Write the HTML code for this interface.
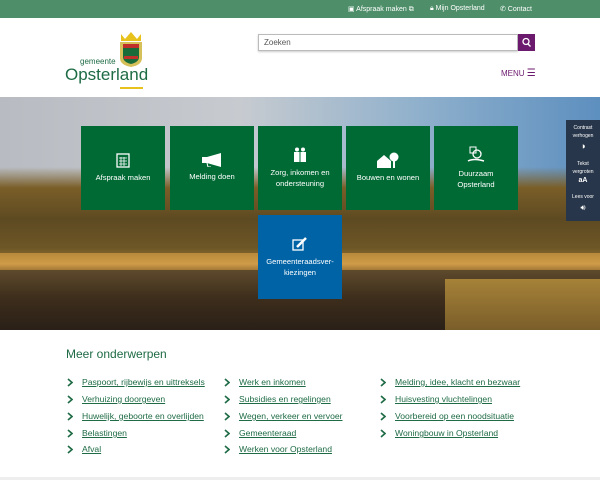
<!DOCTYPE html>
<html><head><meta charset="utf-8">
<style>
*{margin:0;padding:0;box-sizing:border-box}
body{width:600px;height:480px;overflow:hidden;background:#fff;font-family:"Liberation Sans",sans-serif;position:relative}
.top{position:absolute;left:0;top:0;width:600px;height:18px;background:#4e8f6a;color:#fff;font-size:7px}
.top span{position:absolute;top:5px}
.hdr{position:absolute;top:18px;left:0;width:600px;height:79px;background:#fff}
.search{position:absolute;left:258px;top:34px;width:260px;height:17px;border:1px solid #bbb;box-shadow:0 1px 2px rgba(0,0,0,.2);font-size:8px;color:#555;padding:3px 5px}
.sbtn{position:absolute;left:518px;top:34px;width:17px;height:17px;background:#6c1a6e}
.menu{position:absolute;left:501px;top:68px;font-size:8px;color:#6c1a6e}
.hero{position:absolute;left:0;top:97px;width:600px;height:233px;overflow:hidden;
background:linear-gradient(90deg,#b8bcc2,#c7cbd0 40%,#8fb0cc 70%,#5d8fbf)}
.trees{position:absolute;left:0;top:70px;width:600px;height:95px;background:linear-gradient(180deg,rgba(110,90,40,0),#7a5e28 22%,#5e4a22 55%,#6d5626 85%,#9a7430 100%)}
.grass{position:absolute;left:0;top:156px;width:600px;height:18px;background:linear-gradient(180deg,#b88a3a,#cf9c48 60%,#9d7434)}
.water{position:absolute;left:0;top:173px;width:600px;height:60px;background:linear-gradient(180deg,#5e4a2c,#3e2e1c 45%,#2a2017)}
.rg{position:absolute;left:445px;top:182px;width:155px;height:51px;background:linear-gradient(180deg,#a68238,#7a5e2a)}
.tile{position:absolute;width:84px;height:84px;background:#006a35;color:#fff;font-size:7.6px;text-align:center;display:flex;flex-direction:column;align-items:center;justify-content:center;line-height:1.5}
.tile svg{margin-bottom:4px}
.side{position:absolute;left:566px;top:120px;width:34px;height:101px;background:#27364a;color:#fff;font-size:5px;text-align:center;line-height:1.5;padding-top:5px}
h2{position:absolute;left:66px;top:347px;font-size:12px;font-weight:normal;color:#1e6b45}
.l{position:absolute;font-size:8.6px;color:#1e6b45;text-decoration:underline}
.c{position:absolute;width:6px;height:9px}
.bot{position:absolute;left:0;top:477px;width:600px;height:3px;background:#eee}
</style></head><body>
<div class="top">
<span style="left:348px">▣ Afspraak maken ⧉</span>
<span style="left:430px">🔒︎ Mijn Opsterland</span>
<span style="left:500px">✆ Contact</span>
</div>
<div class="hdr">
<svg style="position:absolute;left:117px;top:12px" width="28" height="38" viewBox="0 0 28 38">
<path d="M4 4 L8 9 L14 2 L20 9 L24 4 L24 11 L4 11Z" fill="#e7c21c"/>
<path d="M3 12 H25 V28 Q25 35 14 37 Q3 35 3 28Z" fill="#d6c05a"/>
<path d="M6 14 H22 V27 Q22 32 14 34 Q6 32 6 27Z" fill="#1a6b3a"/>
<rect x="6" y="14" width="16" height="4" fill="#c0302a"/>
<rect x="7" y="26" width="14" height="3" fill="#c0302a"/>
</svg>
<div style="position:absolute;left:80px;top:39px;font-size:8px;color:#1e6b45">gemeente</div>
<div style="position:absolute;left:65px;top:47px;font-size:17px;color:#1e6b45">Opsterland</div>
<div style="position:absolute;left:120px;top:69px;width:23px;height:2px;background:#e7c21c"></div>
</div>
<div class="search">Zoeken</div>
<div class="sbtn"><svg width="17" height="17"><circle cx="8" cy="7.5" r="3" stroke="#fff" stroke-width="1.3" fill="none"/><path d="M10 10 L12.5 12.5" stroke="#fff" stroke-width="1.3"/></svg></div>
<div class="menu">MENU <span style="font-size:10px">☰</span></div>
<div class="hero"><div class="trees"></div><div class="grass"></div><div class="water"></div><div class="rg"></div></div>
<div class="tile" style="left:81px;top:126px"><svg width="14" height="16"><rect x="1" y="2" width="12" height="13" fill="none" stroke="#fff" stroke-width="1.3"/><path d="M3 6h8M3 9h8M3 12h8M5 5v9M8 5v9" stroke="#fff" stroke-width=".8"/></svg>Afspraak maken</div>
<div class="tile" style="left:170px;top:126px"><svg width="22" height="14"><path d="M1 4h5l14-4v14L6 10H1z" fill="#fff"/><path d="M6 10l1 4h3" stroke="#fff" fill="none"/></svg>Melding doen</div>
<div class="tile" style="left:258px;top:126px"><svg width="14" height="16"><circle cx="4" cy="2.5" r="2" fill="#fff"/><circle cx="10" cy="2.5" r="2" fill="#fff"/><rect x="1" y="5" width="12" height="10" fill="#fff"/><path d="M7 5v10" stroke="#006a35"/></svg>Zorg, inkomen en<br>ondersteuning</div>
<div class="tile" style="left:346px;top:126px"><svg width="24" height="16"><path d="M1 9L8 3l7 6v7H1z" fill="#fff"/><circle cx="18" cy="5" r="4.5" fill="#fff"/><rect x="17" y="8" width="2" height="8" fill="#fff"/></svg>Bouwen en wonen</div>
<div class="tile" style="left:434px;top:126px"><svg width="18" height="18"><rect x="3" y="1" width="6" height="6" fill="none" stroke="#fff"/><circle cx="10" cy="8" r="4" fill="none" stroke="#fff" stroke-width="1.3"/><path d="M1 15q6-3 16 0" stroke="#fff" stroke-width="1.5" fill="none"/></svg>Duurzaam<br>Opsterland</div>
<div class="tile" style="left:258px;top:215px;background:#0063a6"><svg width="16" height="16"><rect x="1" y="4" width="10" height="10" fill="none" stroke="#fff" stroke-width="1.3"/><path d="M5 11L14 2" stroke="#fff" stroke-width="2.5"/></svg>Gemeenteraadsver-<br>kiezingen</div>
<div class="side">Contrast<br>verhogen<br><span style="font-size:9px">◑</span><br><br>Tekst<br>vergroten<br><span style="font-size:7px;font-weight:bold">aA</span><br><br>Lees voor<br><span style="font-size:8px">🔊︎</span></div>
<h2>Meer onderwerpen</h2>
<svg width="0" height="0" style="position:absolute"><defs><path id="ch" d="M1 1 L5 4.5 L1 8" stroke="#1e6b45" stroke-width="1.6" fill="none"/></defs></svg>
<svg class="c" style="left:67px;top:378px"><use href="#ch"/></svg><a class="l" style="left:82px;top:377px">Paspoort, rijbewijs en uittreksels</a>
<svg class="c" style="left:67px;top:395px"><use href="#ch"/></svg><a class="l" style="left:82px;top:394px">Verhuizing doorgeven</a>
<svg class="c" style="left:67px;top:412px"><use href="#ch"/></svg><a class="l" style="left:82px;top:411px">Huwelijk, geboorte en overlijden</a>
<svg class="c" style="left:67px;top:429px"><use href="#ch"/></svg><a class="l" style="left:82px;top:428px">Belastingen</a>
<svg class="c" style="left:67px;top:445px"><use href="#ch"/></svg><a class="l" style="left:82px;top:444px">Afval</a>
<svg class="c" style="left:224px;top:378px"><use href="#ch"/></svg><a class="l" style="left:239px;top:377px">Werk en inkomen</a>
<svg class="c" style="left:224px;top:395px"><use href="#ch"/></svg><a class="l" style="left:239px;top:394px">Subsidies en regelingen</a>
<svg class="c" style="left:224px;top:412px"><use href="#ch"/></svg><a class="l" style="left:239px;top:411px">Wegen, verkeer en vervoer</a>
<svg class="c" style="left:224px;top:429px"><use href="#ch"/></svg><a class="l" style="left:239px;top:428px">Gemeenteraad</a>
<svg class="c" style="left:224px;top:445px"><use href="#ch"/></svg><a class="l" style="left:239px;top:444px">Werken voor Opsterland</a>
<svg class="c" style="left:380px;top:378px"><use href="#ch"/></svg><a class="l" style="left:395px;top:377px">Melding, idee, klacht en bezwaar</a>
<svg class="c" style="left:380px;top:395px"><use href="#ch"/></svg><a class="l" style="left:395px;top:394px">Huisvesting vluchtelingen</a>
<svg class="c" style="left:380px;top:412px"><use href="#ch"/></svg><a class="l" style="left:395px;top:411px">Voorbereid op een noodsituatie</a>
<svg class="c" style="left:380px;top:429px"><use href="#ch"/></svg><a class="l" style="left:395px;top:428px">Woningbouw in Opsterland</a>
<div class="bot"></div>
</body></html>
